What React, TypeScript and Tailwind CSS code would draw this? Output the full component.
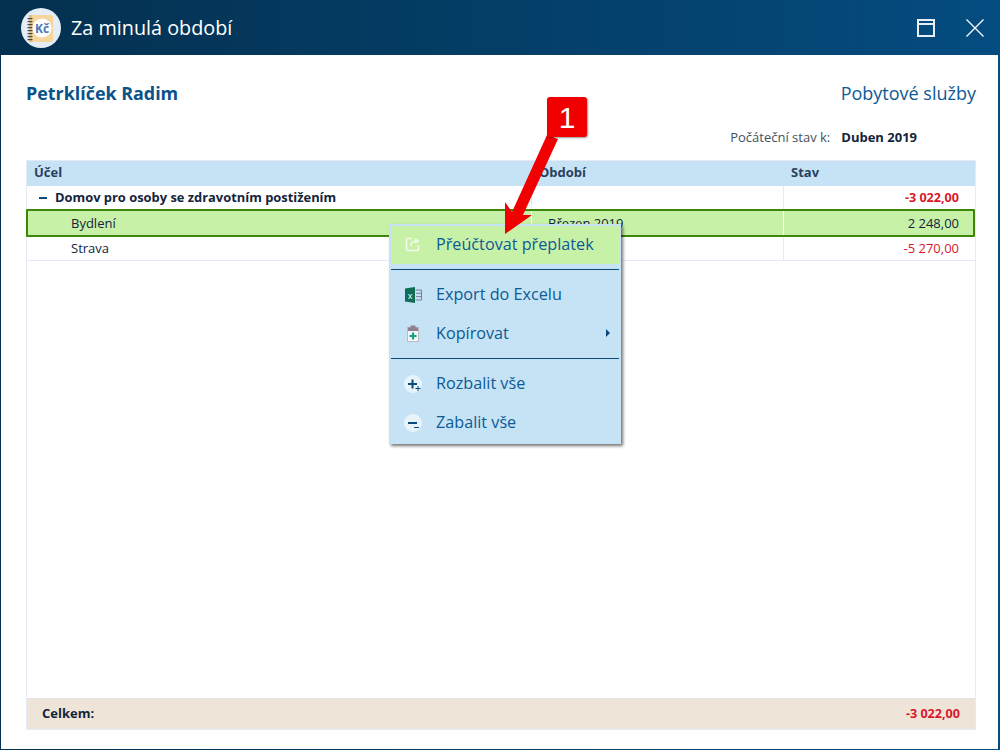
const gridCols = 'grid grid-cols-[505px_252px_1fr]';
const selectedCols = 'grid grid-cols-[504px_252px_1fr]';
const cellLine = 'border-r border-[#e6eaf6]';

const AppLogo = () => (
  <svg width="40" height="40" viewBox="0 0 40 40" className="shrink-0">
    <circle cx="20" cy="20" r="20" fill="#e3edf5" />
    <rect x="8" y="7" width="24" height="27" rx="2" fill="#f6d69b" />
    <rect x="8" y="7" width="3" height="27" fill="#e7bd78" />
    {[10, 13, 16, 19, 22, 25, 28, 31].map((y) => (
      <rect key={y} x="6.5" y={y} width="5" height="1.2" fill="#4a4a4a" />
    ))}
    <circle cx="21" cy="20" r="9.5" fill="#ffffff" />
    <text x="21" y="24.5" textAnchor="middle" fontFamily="'Open Sans', sans-serif" fontWeight="700" fontSize="12" fill="#4a78b5">Kč</text>
  </svg>
);

const CloseIcon = () => (
  <svg width="18" height="18" viewBox="0 0 18 18" fill="none" stroke="#f2f6f9" strokeWidth="1.4">
    <path d="M0.5 0.5L17.5 17.5M17.5 0.5L0.5 17.5" />
  </svg>
);

const ShareIcon = () => (
  <svg width="16" height="16" viewBox="0 0 16 16" fill="none" stroke="#f1fae8" strokeWidth="1.6">
    <path d="M7 2.5H2.5a1 1 0 0 0-1 1v10a1 1 0 0 0 1 1h10a1 1 0 0 0 1-1V9" />
    <path d="M5.5 10c.5-3 2.5-5 6-5" />
    <path d="M10 1.5l4.5 3.5-4.5 3z" fill="#f1fae8" stroke="none" />
  </svg>
);

const ExcelIcon = () => (
  <svg width="17" height="16" viewBox="0 0 17 16">
    <path d="M0 1.5L10 0v16L0 14.5z" fill="#0f6d55" />
    <text x="5" y="11.5" textAnchor="middle" fontFamily="'Open Sans', sans-serif" fontSize="9" fill="#ffffff">x</text>
    <path d="M10.5 3h6v10h-6M11 6.3h5.5M11 9.6h5.5" fill="none" stroke="#7f7f9a" strokeWidth="1" />
  </svg>
);

const ClipboardIcon = () => (
  <svg width="12" height="17" viewBox="0 0 12 17">
    <rect x="0.5" y="2.5" width="11" height="14" fill="#f4f6f8" stroke="#b9bcc4" />
    <rect x="1" y="2.5" width="10" height="3.5" fill="#8e7f92" />
    <rect x="3.5" y="0.5" width="5" height="3" fill="#8e7f92" />
    <path d="M6 7.5v7M2.5 11h7" stroke="#12a184" strokeWidth="2.2" />
  </svg>
);

const CircleIcon = ({ plus }: { plus?: boolean }) => (
  <svg width="18" height="18" viewBox="0 0 18 18">
    <circle cx="9" cy="9" r="9" fill="#e8f3fa" />
    <path d="M4 9h9" stroke="#0a4a7c" strokeWidth="2" />
    {plus ? (
      <>
        <path d="M8.5 4.5v9" stroke="#0a4a7c" strokeWidth="2" />
        <path d="M11.5 13.5h5M14 11v5" stroke="#0a4a7c" strokeWidth="1" />
      </>
    ) : (
      <path d="M10 13.5h5" stroke="#0a4a7c" strokeWidth="1" />
    )}
  </svg>
);

const menuItem = 'flex items-center h-[39px] text-[16.2px] text-[#0d5a94]';

const ContextMenu = () => (
  <div className="absolute left-[389px] top-[224px] w-[232px] h-[220px] bg-[#c5e3f5] pt-[2px] shadow-[2px_2px_3px_rgba(0,0,0,0.55)]">
    <div className="mx-[2px] flex items-center h-[38px] pb-[2px] bg-[#c8f1a8] text-[16.2px] text-[#0d5a94]">
      <div className="w-[45px] pl-[14px] flex"><ShareIcon /></div>
      <span>Přeúčtovat přeplatek</span>
    </div>
    <div className="mx-[2px] mt-[5px] mb-[5px] border-t border-[#0a4a7c]" />
    <div className={menuItem}>
      <div className="w-[47px] pl-[16px] flex"><ExcelIcon /></div>
      <span className="-mt-[1px]">Export do Excelu</span>
    </div>
    <div className={`${menuItem} relative`}>
      <div className="w-[47px] pl-[18px] flex"><ClipboardIcon /></div>
      <span className="-mt-[1px]">Kopírovat</span>
      <span className="absolute right-[11px] top-[15px] border-y-[4px] border-l-[4px] border-y-transparent border-l-[#0a4a7c]" />
    </div>
    <div className="mx-[2px] mt-[5px] mb-[5px] border-t border-[#0a4a7c]" />
    <div className={menuItem}>
      <div className="w-[47px] pl-[15px] flex"><CircleIcon plus /></div>
      <span className="-mt-[1px]">Rozbalit vše</span>
    </div>
    <div className={menuItem}>
      <div className="w-[47px] pl-[15px] flex"><CircleIcon /></div>
      <span className="-mt-[1px]">Zabalit vše</span>
    </div>
  </div>
);

const Callout = () => (
  <>
    <svg width="70" height="110" viewBox="0 0 70 110" className="absolute left-[490px] top-[130px]">
      <path d="M57 5L68 9L33 85L42 85L15 104L15 72L22 82Z" fill="#f00000" />
    </svg>
    <div className="absolute left-[547px] top-[97px] w-[40px] h-[40px] rounded-[3px] bg-[#f00000] shadow-[1px_1px_2px_rgba(0,0,0,0.4)] flex items-center justify-center text-white text-[30px] font-['Liberation_Sans',sans-serif]">
      1
    </div>
  </>
);

export default function App() {
  return (
    <div className="relative w-[1000px] h-[750px] flex flex-col overflow-hidden bg-gradient-to-r from-[#04304f] to-[#044c80] font-['Open_Sans',sans-serif]">
      <div className="h-[55px] shrink-0 flex items-center pl-[21px] pr-[16px]">
        <AppLogo />
        <span className="ml-[10px] text-[19.8px] text-white">Za minulá období</span>
        <div className="ml-auto flex items-center gap-[31px]">
          <div className="w-[18px] h-[18px] border-2 border-[#e8eef3]">
            <div className="border-t-2 border-[#e8eef3] mt-[2px]" />
          </div>
          <CloseIcon />
        </div>
      </div>

      <div className="flex-1 ml-[1px] mr-[2px] mb-[1px] bg-white flex flex-col px-[25px] pb-[19px]">
        <div className="flex items-center justify-between pt-[25px] -mr-[3px] h-[52px]">
          <span className="text-[17.9px] font-bold text-[#0a5288]">Petrklíček Radim</span>
          <span className="text-[18px] text-[#0d5a94]">Pobytové služby</span>
        </div>
        <div className="flex justify-end items-center h-[24px] mt-[19px] pr-[56px] text-[13px]">
          <span className="text-[#44505c]">Počáteční stav k:</span>
          <span className="ml-[11px] font-bold text-[#14243c]">Duben 2019</span>
        </div>
        <div className="flex-1 mt-[10px] w-[950px] border border-[#e6eaf6] flex flex-col text-[13px] text-[#14243c]">
          <div className={`${gridCols} h-[25px] pb-[2px] bg-[#c5e3f5] font-bold text-[#2a3f5f] items-center`}>
            <div className="pl-[7px]">Účel</div>
            <div className="pl-[7px]">Období</div>
            <div className="pl-[7px]">Stav</div>
          </div>
          <div className={`${gridCols} h-[23px] font-bold items-center`}>
            <div className={`flex items-center h-full pl-[12px] ${cellLine}`}>
              <span className="w-[8px] h-[2px] bg-[#0a4a7c]" />
              <span className="ml-[8px] text-[12.9px]">Domov pro osoby se zdravotním postižením</span>
            </div>
            <div className={`h-full ${cellLine}`} />
            <div className="text-right pr-[16px] pt-[2px] text-[12.6px] text-[#d9172c]">-3 022,00</div>
          </div>
          <div className={`${selectedCols} h-[28px] -ml-[1px] items-center bg-[#c8f1a8] border-2 border-[#3f8708] rounded-[1px]`}>
            <div className="pl-[43px] pt-[1px] h-full flex items-center border-r border-white">Bydlení</div>
            <div className="pl-[16px] pt-[1px] h-full flex items-center border-r border-white">Březen 2019</div>
            <div className="pr-[14px] pt-[1px] h-full flex items-center justify-end">2 248,00</div>
          </div>
          <div className={`${gridCols} h-[24px] items-center border-b border-[#e6eaf6]`}>
            <div className={`pl-[44px] h-full flex items-center ${cellLine}`}>Strava</div>
            <div className={`h-full ${cellLine}`} />
            <div className="text-right pr-[16px] text-[#d9172c]">-5 270,00</div>
          </div>
          <div className="flex-1" />
          <div className="h-[31px] bg-[#eee5d8] border-t border-[#dfe0e8] flex items-center justify-between pl-[15px] pr-[15px] font-bold">
            <span>Celkem:</span>
            <span className="text-[12.6px] text-[#d9172c]">-3 022,00</span>
          </div>
        </div>
      </div>

      <ContextMenu />
      <Callout />
    </div>
  );
}
